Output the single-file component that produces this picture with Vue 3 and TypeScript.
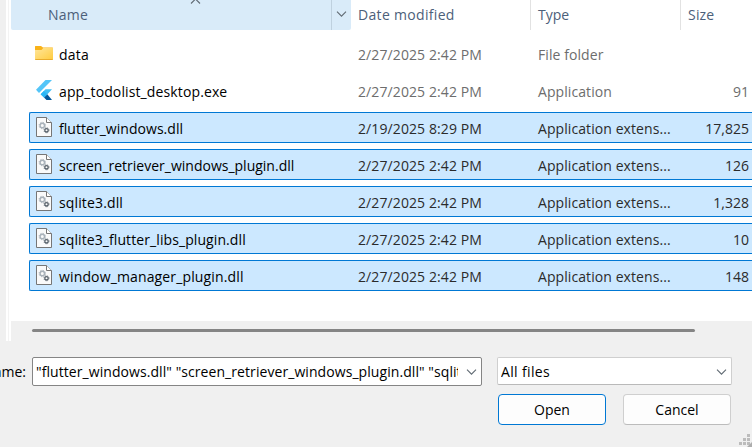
<script setup lang="ts">
interface FileRow {
  name: string
  date: string
  type: string
  size: string
  icon: 'folder' | 'flutter' | 'dll'
  selected: boolean
  tracking: string
}

const rows: FileRow[] = [
  { name: 'data', date: '2/27/2025 2:42 PM', type: 'File folder', size: '', icon: 'folder', selected: false, tracking: '0.2px' },
  { name: 'app_todolist_desktop.exe', date: '2/27/2025 2:42 PM', type: 'Application', size: '91', icon: 'flutter', selected: false, tracking: '0.12px' },
  { name: 'flutter_windows.dll', date: '2/19/2025 8:29 PM', type: 'Application extens...', size: '17,825', icon: 'dll', selected: true, tracking: '0.04px' },
  { name: 'screen_retriever_windows_plugin.dll', date: '2/27/2025 2:42 PM', type: 'Application extens...', size: '126', icon: 'dll', selected: true, tracking: '0px' },
  { name: 'sqlite3.dll', date: '2/27/2025 2:42 PM', type: 'Application extens...', size: '1,328', icon: 'dll', selected: true, tracking: '0.14px' },
  { name: 'sqlite3_flutter_libs_plugin.dll', date: '2/27/2025 2:42 PM', type: 'Application extens...', size: '10', icon: 'dll', selected: true, tracking: '0.09px' },
  { name: 'window_manager_plugin.dll', date: '2/27/2025 2:42 PM', type: 'Application extens...', size: '148', icon: 'dll', selected: true, tracking: '0.14px' },
]
</script>

<template>
  <div class="dialog">
    <div class="browser">
      <div class="nav-edge"></div>
      <div class="splitter"></div>
      <div class="pane">
        <div class="list">
          <div class="header">
            <div class="col-name">
              <span class="label">Name</span>
              <svg class="sort" width="11" height="5" viewBox="0 0 11 5"><path d="M1 4.5 5.5 0 10 4.5" /></svg>
              <span class="drop">
                <svg width="11" height="6" viewBox="0 0 11 6"><path d="M1 .7 5.5 5.2 10 .7" /></svg>
              </span>
            </div>
            <div class="col-date"><span class="label">Date modified</span></div>
            <div class="col-type"><span class="label">Type</span></div>
            <div class="col-size"><span class="label">Size</span></div>
          </div>
          <div class="rows">
            <div v-for="row in rows" :key="row.name" class="row" :class="{ selected: row.selected }">
              <span class="icon">
                <svg v-if="row.icon === 'folder'" width="20" height="20" viewBox="0 0 20 20">
                  <defs>
                    <linearGradient id="folder" x1="0" y1="0" x2="1" y2="1">
                      <stop offset="0" stop-color="#ffe69b" />
                      <stop offset="1" stop-color="#ffcb3d" />
                    </linearGradient>
                  </defs>
                  <path d="M1 3.500Q1 3 1.500 3H7l2 1.500h9.500q.5 0 .5.5v6H1Z" fill="#f9b218" />
                  <path d="M1 7h6.500L9.300 5H19v11q0 1-1 1H2q-1 0-1-1Z" fill="url(#folder)" />
                  <path d="M1.300 16.500h17.400" stroke="#e9ac2c" />
                </svg>
                <svg v-else-if="row.icon === 'flutter'" width="20" height="20" viewBox="0 0 20 20">
                  <path d="M11.500 0H18L5 13 2 9.800Z" fill="#54c5f8" />
                  <path d="M11.500 9.300H18L13.200 14.500 10 17.500 6.600 14.200Z" fill="#40bff5" />
                  <path d="m10 17.500 3.300-3.200L18 20h-5.500Z" fill="#01579b" />
                  <path d="m6.700 14.200 3.200-3.200 3.300 3.300-3.200 3.200Z" fill="#29b6f6" />
                </svg>
                <svg v-else width="20" height="20" viewBox="0 0 20 20">
                  <path d="M2.500.500h10L17.500 5.500v14h-15Z" fill="#fafafa" stroke="#767676" />
                  <path d="M12.500.500v5h5" fill="#fff" stroke="#767676" />
                  <circle cx="8.300" cy="8.500" r="2.200" fill="none" stroke="#a9b2ba" stroke-width="1.400" />
                  <circle cx="8.300" cy="8.500" r="3.200" fill="none" stroke="#a9b2ba" stroke-width="1" stroke-dasharray="1.250 1.263" />
                  <circle cx="12.500" cy="13.300" r="1.700" fill="none" stroke="#59636c" stroke-width="1.300" />
                  <circle cx="12.500" cy="13.300" r="2.500" fill="none" stroke="#59636c" stroke-width=".900" stroke-dasharray="1 .963" />
                </svg>
              </span>
              <span class="name" :style="{ letterSpacing: row.tracking }">{{ row.name }}</span>
              <span class="date">{{ row.date }}</span>
              <span class="type">{{ row.type }}</span>
              <span class="size">{{ row.size }}</span>
            </div>
          </div>
        </div>
        <div class="scroll"><div class="thumb"></div></div>
      </div>
    </div>
    <div class="footer">
      <div class="fields">
        <span class="field-label"><span>File name:</span></span>
        <div class="combo filename">
          <span class="value">"flutter_windows.dll" "screen_retriever_windows_plugin.dll" "sqlite3.dll"</span>
          <svg width="11" height="6" viewBox="0 0 11 6"><path d="M1 .7 5.5 5.2 10 .7" /></svg>
        </div>
        <div class="combo filter">
          <span class="value">All files</span>
          <svg width="11" height="6" viewBox="0 0 11 6"><path d="M1 .7 5.5 5.2 10 .7" /></svg>
        </div>
      </div>
      <div class="buttons">
        <button class="btn primary">Open</button>
        <button class="btn">Cancel</button>
      </div>
      <svg class="grip" width="13" height="13" viewBox="0 0 13 13" fill="#bcbcbc">
        <path d="M8 0h3v3H8zM4 4h3v3H4zM8 4h3v3H8zM0 8h3v3H0zM4 8h3v3H4zM8 8h3v3H8z" />
        <path d="M13 8v5H8Z" fill="#adadad" />
      </svg>
    </div>
  </div>
</template>

<style>
body {
  overflow: hidden;
}
</style>

<style scoped>
.dialog {
  width: 752px;
  height: 447px;
  box-sizing: border-box;
  overflow: hidden;
  display: flex;
  flex-direction: column;
  background: #f0f0f0;
  font-family: "Open Sans", "Noto Sans", sans-serif;
  font-size: 14px;
  line-height: 20px;
  color: #000;
}
.browser {
  height: 341px;
  display: flex;
}
.nav-edge {
  width: 6px;
}
.splitter {
  width: 5px;
  box-sizing: border-box;
  background: linear-gradient(90deg, #fff 2px, #f3f3f3 2px, #f3f3f3 3px, #fff 3px);
}
.pane {
  flex: 1;
}
.list {
  height: 321px;
  background: #fff;
}
.header {
  height: 30px;
  display: flex;
  color: #4c607a;
}
.header > div {
  box-sizing: border-box;
  display: flex;
  align-items: center;
}
.col-name {
  width: 340px;
  background: #d9ebf9;
  border-radius: 0 0 2px 2px;
  padding-left: 37px;
  position: relative;
}
.col-name .label {
  letter-spacing: 0.2px;
}
.col-date {
  width: 180px;
  padding-left: 7px;
  border-right: 1px solid #e2e2e2;
  letter-spacing: 0.32px;
}
.col-type {
  width: 150px;
  padding-left: 7px;
  border-right: 1px solid #e2e2e2;
}
.col-size {
  padding-left: 7px;
  letter-spacing: 0.2px;
}
.sort,
.drop svg,
.combo svg {
  display: block;
  fill: none;
  stroke: #606a73;
  stroke-width: 1.1;
}
.sort {
  position: absolute;
  left: 179px;
  top: -1px;
}
.drop {
  box-sizing: border-box;
  width: 20px;
  height: 30px;
  margin-left: auto;
  padding: 11px 0 0 4px;
  border-left: 1px solid #bfd1df;
}
.rows {
  display: flex;
  flex-direction: column;
  gap: 6px;
  padding: 8px 0 0 18px;
}
.row {
  box-sizing: border-box;
  height: 31px;
  display: grid;
  grid-template-columns: 29px 299px 180px 122px 89px;
  align-items: start;
  border: 1px solid transparent;
  border-right: 0;
  border-radius: 2px 0 0 2px;
  padding-top: 6px;
  white-space: nowrap;
  color: #6d6d6d;
}
.row.selected {
  background: #cce8ff;
  border-color: #0078d4;
  color: #2b2b2b;
}
.icon {
  height: 20px;
  padding-left: 4px;
  margin-top: -2px;
}
.icon svg {
  display: block;
}
.name {
  color: #000;
}
.date {
  letter-spacing: 0.1px;
}
.type {
  letter-spacing: 0.08px;
}
.size {
  text-align: right;
}
.scroll {
  padding: 8px 57px 0 21px;
}
.thumb {
  height: 3px;
  border-radius: 1.5px;
  background: #858585;
}
.footer {
  flex: 1;
  position: relative;
  padding-top: 16px;
}
.fields {
  display: flex;
  align-items: flex-start;
}
.field-label {
  width: 32px;
  height: 29px;
  box-sizing: border-box;
  padding-right: 6px;
  display: flex;
  align-items: center;
  justify-content: flex-end;
  overflow: hidden;
  white-space: nowrap;
}
.combo {
  box-sizing: border-box;
  display: flex;
  align-items: center;
  justify-content: space-between;
  background: #fff;
}
.combo svg {
  flex: none;
}
.filename {
  width: 450px;
  height: 29px;
  border: 1px solid #858585;
  border-radius: 2px;
  padding: 0 4px 0 3px;
}
.value {
  overflow: hidden;
  white-space: nowrap;
}
.filename .value {
  width: 422px;
  letter-spacing: 0.07px;
}
.filter {
  width: 235px;
  height: 28px;
  margin-left: 15px;
  border: 1px solid #cfcfcf;
  border-bottom-color: #b9b9b9;
  border-radius: 2px;
  padding: 1px 4px 0 3px;
}
.filter .value {
  letter-spacing: 0.35px;
}
.buttons {
  display: flex;
  gap: 17px;
  padding: 8px 0 0 498px;
}
.btn {
  width: 108px;
  height: 31px;
  padding: 0;
  border: 1px solid #cfcfcf;
  border-bottom-color: #bcbcbc;
  border-radius: 4px;
  background: #fdfdfd;
  font: inherit;
  color: #000;
}
.primary {
  border-color: #0078d4;
}
.grip {
  position: absolute;
  right: 0;
  bottom: 0;
}
</style>
